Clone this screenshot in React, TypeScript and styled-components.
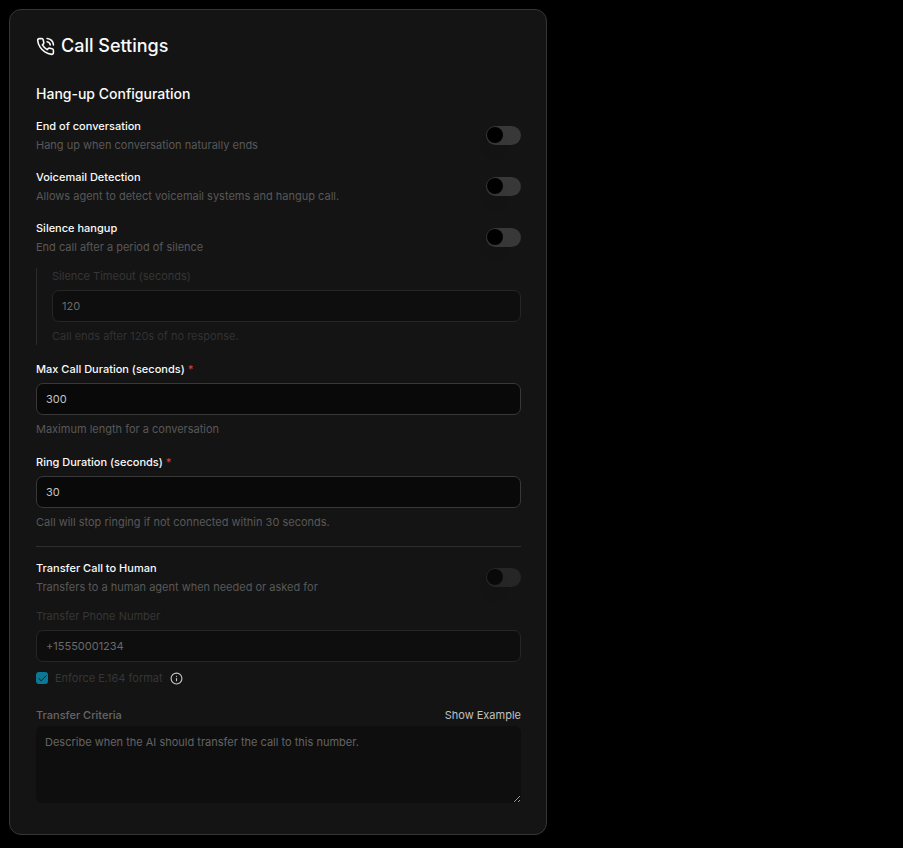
import React from "react";
import styled, { createGlobalStyle } from "styled-components";
import { Check, Info } from "lucide-react";

const GlobalStyle = createGlobalStyle`
  * { box-sizing: border-box; }
  body {
    margin: 0;
    background: #000;
    color: #fafafa;
    font-family: Inter, "Liberation Sans", sans-serif;
    font-size: 11px;
    line-height: 16px;
  }
  input, textarea, button { font: inherit; }
`;

const Page = styled.main`
  padding: 9px;
`;

const Card = styled.section`
  width: 100%;
  max-width: 538px;
  padding: 22px 25px 31px 26px;
  display: flex;
  flex-direction: column;
  background: #141414;
  border: 1px solid #363636;
  border-radius: 12px;
`;

const Title = styled.h1`
  margin: 0 0 24px;
  display: flex;
  align-items: center;
  gap: 6px;
  font-size: 18px;
  line-height: 28px;
  font-weight: 500;
`;

const SectionTitle = styled.h2`
  margin: 0 0 13px;
  font-size: 14px;
  line-height: 20px;
  font-weight: 500;
`;

const Stack = styled.div<{ $gap: number }>`
  display: flex;
  flex-direction: column;
  gap: ${(p) => p.$gap}px;
`;

const ToggleRow = styled.div`
  display: flex;
  align-items: center;
  justify-content: space-between;
  gap: 16px;
`;

const ToggleText = styled.div`
  display: flex;
  flex-direction: column;
  gap: 1px;
  line-height: 18px;
`;

const ToggleLabel = styled.label`
  font-weight: 500;
`;

const Muted = styled.span`
  color: #585858;
`;

const Switch = styled.input`
  appearance: none;
  flex: none;
  width: 35px;
  height: 19px;
  margin: 0;
  padding: 1px;
  display: flex;
  border-radius: 10px;
  background: #383838;
  &::before {
    content: "";
    width: 16px;
    height: 16px;
    border-radius: 50%;
    background: #000;
    box-shadow: 0 10px 15px -3px rgba(0, 0, 0, 0.1);
  }
  &:checked { justify-content: flex-end; }
  &:disabled { opacity: 0.5; }
`;

const Field = styled.div<{ $dim?: boolean }>`
  display: flex;
  flex-direction: column;
  gap: 6px;
  color: ${(p) => (p.$dim ? "#363636" : "#fafafa")};
`;

const FieldLabel = styled.label<{ $strong?: boolean }>`
  font-weight: ${(p) => (p.$strong ? 500 : 400)};
`;

const Required = styled.span`
  color: #dc3b3b;
`;

const Hint = styled.span<{ $dim?: boolean }>`
  color: ${(p) => (p.$dim ? "#323232" : "#585858")};
`;

const TextInput = styled.input`
  width: 100%;
  height: 32px;
  padding: 0 9px;
  border: 1px solid #383838;
  border-radius: 7px;
  background: #090909;
  color: #c4c4c4;
  outline: none;
  &:disabled {
    border-color: #262626;
    background: #0e0e0e;
    color: #6a6a6a;
  }
`;

const Nested = styled.div`
  margin: 12px 0 16px;
  padding: 0 0 1px 15px;
  border-left: 1px solid #2b2b2b;
`;

const Divider = styled.hr`
  width: 100%;
  height: 1px;
  margin: 16px 0 12px;
  border: 0;
  background: #2e2e2e;
`;

const Transfer = styled.div`
  margin-top: 12px;
`;

const CheckRow = styled.div`
  margin-top: 8px;
  display: flex;
  align-items: center;
  color: #363636;
`;

const CheckBox = styled.span`
  display: grid;
  width: 12px;
  height: 12px;
  margin-right: 7px;
  & > * { grid-area: 1 / 1; }
  svg { pointer-events: none; place-self: center; color: #101010; }
`;

const CheckInput = styled.input`
  appearance: none;
  width: 12px;
  height: 12px;
  margin: 0;
  border-radius: 3px;
  background: #0b7896;
`;

const InfoButton = styled.button`
  display: flex;
  margin-left: 7px;
  padding: 0;
  border: 0;
  background: none;
  color: #c8c8c8;
`;

const CriteriaHead = styled.div`
  margin: 21px 0 3px;
  display: flex;
  justify-content: space-between;
`;

const CriteriaLabel = styled.label`
  color: #666;
  font-weight: 500;
`;

const LinkButton = styled.button`
  padding: 0;
  border: 0;
  background: none;
  color: #c0c0c0;
`;

const Criteria = styled.textarea`
  display: block;
  width: 100%;
  height: 77px;
  padding: 8px 9px;
  border: 0;
  border-radius: 6px;
  background: #0e0e0e;
  color: #6a6a6a;
  resize: vertical;
  outline: none;
  &::placeholder { color: #646464; opacity: 1; }
`;

function CallIcon() {
  return (
    <svg width="19" height="19" viewBox="0 0 24 24" fill="none" stroke="currentColor" strokeWidth="2" strokeLinecap="round" strokeLinejoin="round" aria-hidden="true">
      <path d="M14.05 2a9 9 0 0 1 8 7.94" />
      <path d="M14.05 6A5 5 0 0 1 18 10" />
      <path d="M22 16.92v3a2 2 0 0 1-2.18 2 19.79 19.79 0 0 1-8.63-3.07 19.5 19.5 0 0 1-6-6 19.79 19.79 0 0 1-3.07-8.67A2 2 0 0 1 4.11 2h3a2 2 0 0 1 2 1.72 12.84 12.84 0 0 0 .7 2.81 2 2 0 0 1-.45 2.11L8.09 9.91a16 16 0 0 0 6 6l1.27-1.27a2 2 0 0 1 2.11-.45 12.84 12.84 0 0 0 2.81.7A2 2 0 0 1 22 16.92z" />
    </svg>
  );
}

interface ToggleProps {
  id: string;
  label: string;
  description: string;
  disabled?: boolean;
}

function Toggle({ id, label, description, disabled }: ToggleProps) {
  return (
    <ToggleRow>
      <ToggleText>
        <ToggleLabel htmlFor={id}>{label}</ToggleLabel>
        <Muted>{description}</Muted>
      </ToggleText>
      <Switch id={id} type="checkbox" role="switch" disabled={disabled} />
    </ToggleRow>
  );
}

export default function App() {
  return (
    <>
      <GlobalStyle />
      <Page>
        <Card>
          <Title>
            <CallIcon />
            Call Settings
          </Title>
          <SectionTitle>Hang-up Configuration</SectionTitle>
          <Stack $gap={14}>
            <Toggle id="end" label="End of conversation" description="Hang up when conversation naturally ends" />
            <Toggle id="voicemail" label="Voicemail Detection" description="Allows agent to detect voicemail systems and hangup call." />
            <Toggle id="silence" label="Silence hangup" description="End call after a period of silence" />
          </Stack>
          <Nested>
            <Field $dim>
              <FieldLabel htmlFor="timeout">Silence Timeout (seconds)</FieldLabel>
              <TextInput id="timeout" defaultValue="120" disabled />
              <Hint $dim>Call ends after 120s of no response.</Hint>
            </Field>
          </Nested>
          <Stack $gap={17}>
            <Field>
              <FieldLabel $strong htmlFor="max">
                Max Call Duration (seconds) <Required>*</Required>
              </FieldLabel>
              <TextInput id="max" defaultValue="300" />
              <Hint>Maximum length for a conversation</Hint>
            </Field>
            <Field>
              <FieldLabel $strong htmlFor="ring">
                Ring Duration (seconds) <Required>*</Required>
              </FieldLabel>
              <TextInput id="ring" defaultValue="30" />
              <Hint>Call will stop ringing if not connected within 30 seconds.</Hint>
            </Field>
          </Stack>
          <Divider />
          <Toggle id="transfer" label="Transfer Call to Human" description="Transfers to a human agent when needed or asked for" disabled />
          <Transfer>
            <Field $dim>
              <FieldLabel htmlFor="phone">Transfer Phone Number</FieldLabel>
              <TextInput id="phone" type="tel" defaultValue="+15550001234" disabled />
            </Field>
            <CheckRow>
              <CheckBox>
                <CheckInput id="enforce" type="checkbox" defaultChecked disabled />
                <Check size={11} strokeWidth={2} />
              </CheckBox>
              <label htmlFor="enforce">Enforce E.164 format</label>
              <InfoButton type="button" aria-label="About E.164 format">
                <Info size={13} strokeWidth={2} />
              </InfoButton>
            </CheckRow>
            <CriteriaHead>
              <CriteriaLabel htmlFor="criteria">Transfer Criteria</CriteriaLabel>
              <LinkButton type="button">Show Example</LinkButton>
            </CriteriaHead>
            <Criteria id="criteria" placeholder="Describe when the AI should transfer the call to this number." disabled />
          </Transfer>
        </Card>
      </Page>
    </>
  );
}
